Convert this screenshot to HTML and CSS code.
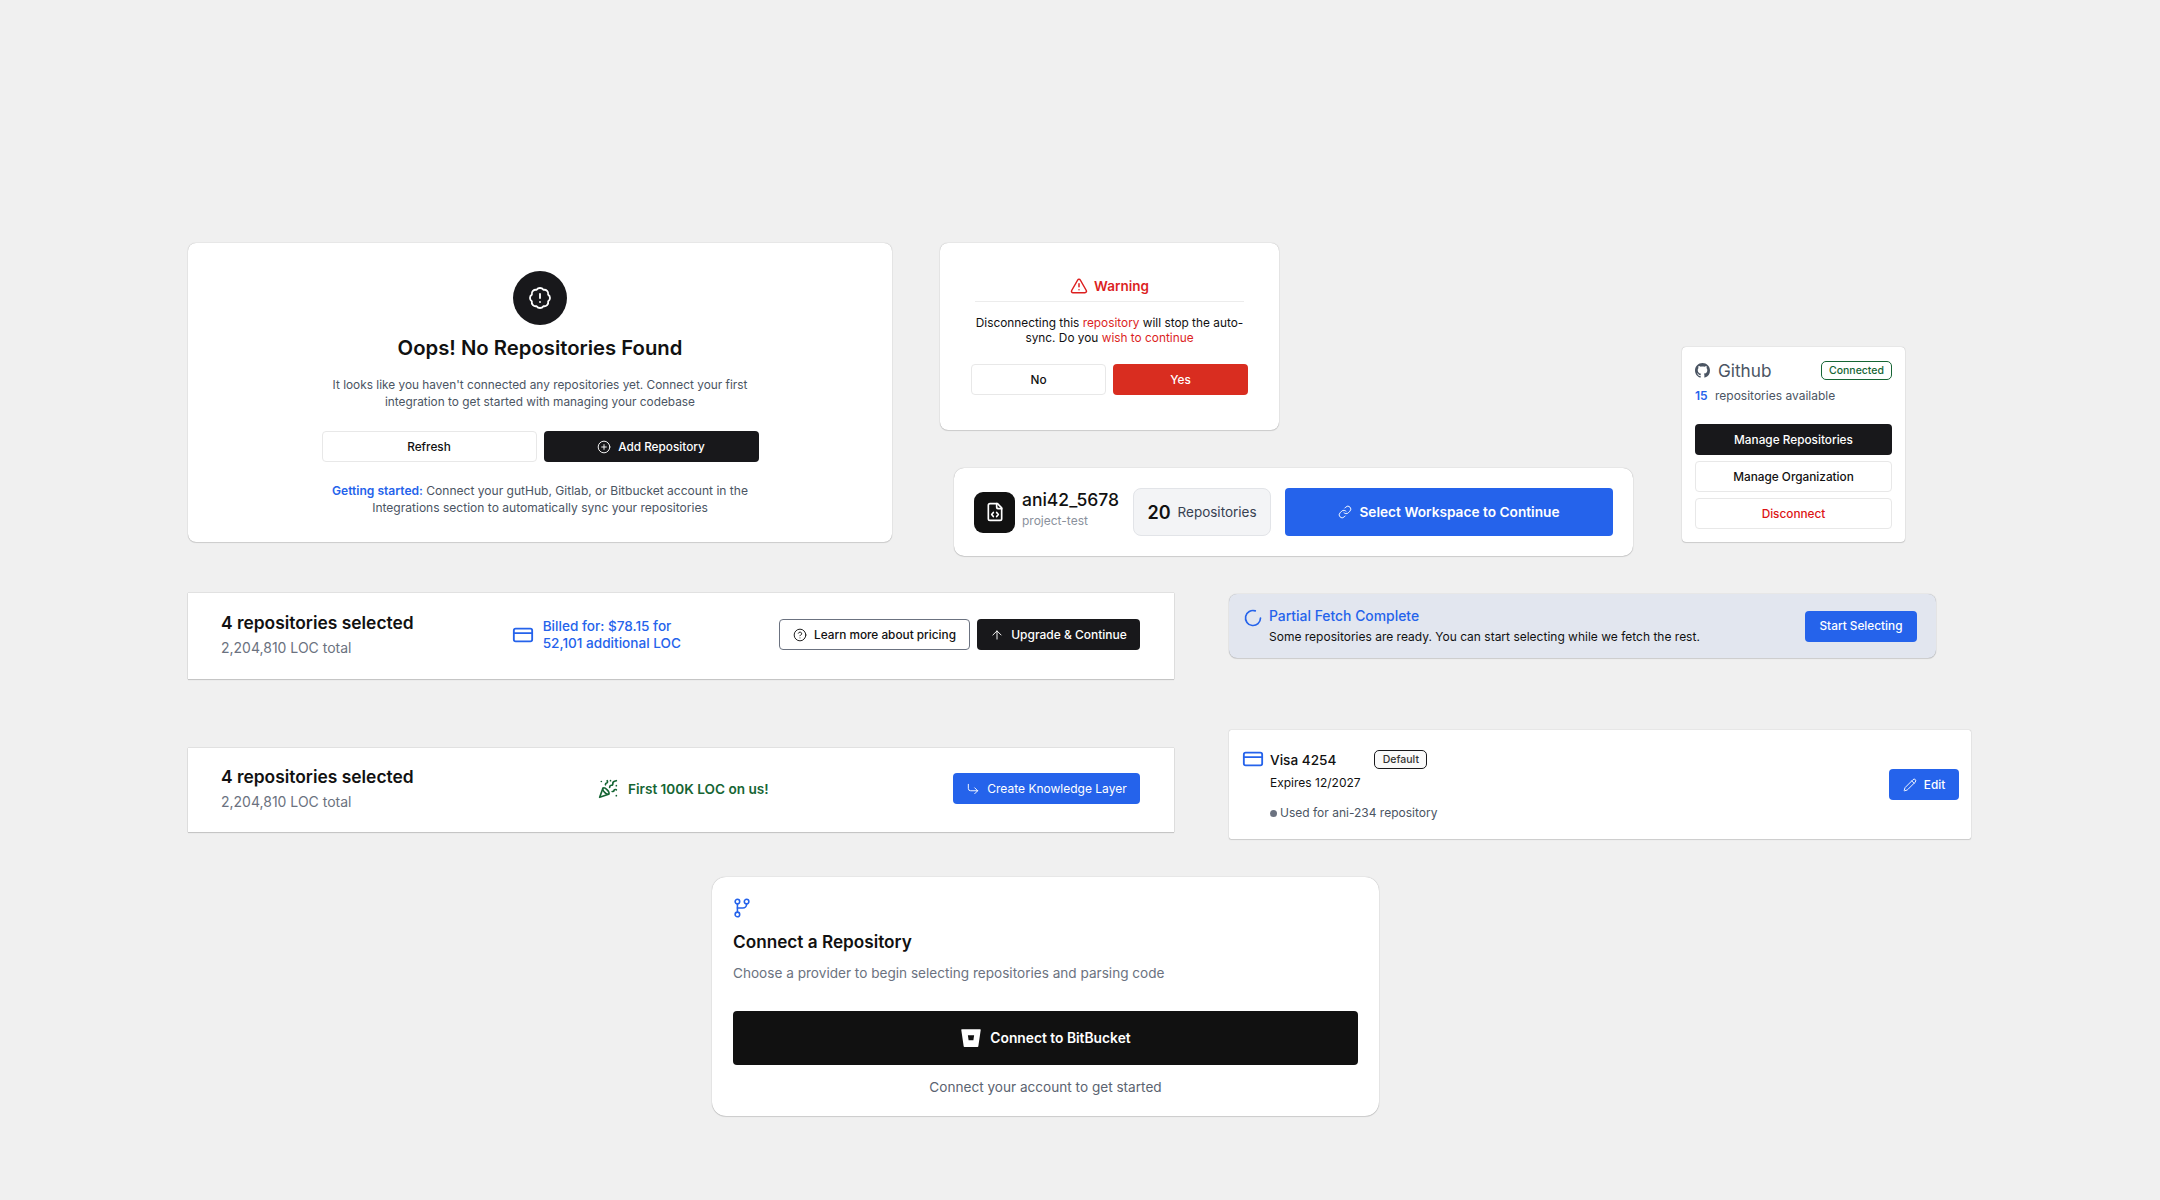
FILE: index.html
```html
<!DOCTYPE html>
<html lang="en">
<head>
   <meta charset="UTF-8">
   <meta name="viewport" content="width=device-width, initial-scale=1.0">
   <title>Repository Components</title>
   <link rel="stylesheet" href="styles.css">
</head>
<body>
   <main class="sheet">
      <section class="row-top">
         <div class="card empty-card">
            <div class="empty-badge">
               <svg class="icon icon-22" viewBox="0 0 24 24"><path d="M3.85 8.62a4 4 0 0 1 4.78-4.77 4 4 0 0 1 6.74 0 4 4 0 0 1 4.78 4.78 4 4 0 0 1 0 6.74 4 4 0 0 1-4.77 4.78 4 4 0 0 1-6.75 0 4 4 0 0 1-4.78-4.77 4 4 0 0 1 0-6.76Z"/><path d="M12 8v4"/><path d="M12 16h.01"/></svg>
            </div>
            <h2 class="empty-title">Oops! No Repositories Found</h2>
            <p class="empty-text">It looks like you haven't connected any repositories yet. Connect your first<br>integration to get started with managing your codebase</p>
            <div class="empty-actions">
               <button class="btn btn-light">Refresh</button>
               <button class="btn btn-dark">
                  <svg class="icon icon-14" viewBox="0 0 24 24"><circle cx="12" cy="12" r="10"/><path d="M8 12h8"/><path d="M12 8v8"/></svg>
                  Add Repository
               </button>
            </div>
            <p class="empty-text empty-hint"><span class="hint-label">Getting started:</span> Connect your gutHub, Gitlab, or Bitbucket account in the<br>Integrations section to automatically sync your repositories</p>
         </div>

         <div class="col-middle">
            <div class="card warning-card">
               <div class="warning-head">
                  <svg class="icon icon-18" viewBox="0 0 24 24"><path d="m21.73 18-8-14a2 2 0 0 0-3.48 0l-8 14A2 2 0 0 0 4 21h16a2 2 0 0 0 1.73-3"/><path d="M12 9v4"/><path d="M12 17h.01"/></svg>
                  Warning
               </div>
               <p class="warning-text">Disconnecting this <span class="red">repository</span> will stop the auto-<br>sync. Do you <span class="red">wish to continue</span></p>
               <div class="warning-actions">
                  <button class="btn btn-light">No</button>
                  <button class="btn btn-red">Yes</button>
               </div>
            </div>

            <div class="card workspace-card">
               <div class="workspace-logo">
                  <svg class="icon icon-20" viewBox="0 0 24 24"><path d="M15 2H6a2 2 0 0 0-2 2v16a2 2 0 0 0 2 2h12a2 2 0 0 0 2-2V7z"/><path d="M14 2v4a2 2 0 0 0 2 2h4"/><path d="M10 12.5 8 15l2 2.5"/><path d="m14 12.5 2 2.5-2 2.5"/></svg>
               </div>
               <div class="workspace-info">
                  <div class="workspace-name">ani42_5678</div>
                  <div class="workspace-sub">project-test</div>
               </div>
               <div class="workspace-count"><b>20</b> Repositories</div>
               <button class="btn btn-blue btn-workspace">
                  <svg class="icon icon-14" viewBox="0 0 24 24"><path d="M10 13a5 5 0 0 0 7.54.54l3-3a5 5 0 0 0-7.07-7.07l-1.72 1.71"/><path d="M14 11a5 5 0 0 0-7.54-.54l-3 3a5 5 0 0 0 7.07 7.07l1.71-1.71"/></svg>
                  Select Workspace to Continue
               </button>
            </div>
         </div>

         <div class="card github-card">
            <div class="github-head">
               <div class="github-name">
                  <svg class="github-mark" viewBox="0 0 16 16"><path d="M8 0C3.58 0 0 3.58 0 8c0 3.54 2.29 6.53 5.47 7.59.4.07.55-.17.55-.38 0-.19-.01-.82-.01-1.49-2.01.37-2.53-.49-2.69-.94-.09-.23-.48-.94-.82-1.13-.28-.15-.68-.52-.01-.53.63-.01 1.08.58 1.23.82.72 1.21 1.87.87 2.33.66.07-.52.28-.87.51-1.07-1.78-.2-3.64-.89-3.64-3.95 0-.87.31-1.59.82-2.15-.08-.2-.36-1.02.08-2.12 0 0 .67-.21 2.2.82.64-.18 1.32-.27 2-.27.68 0 1.36.09 2 .27 1.53-1.04 2.2-.82 2.2-.82.44 1.1.16 1.92.08 2.12.51.56.82 1.27.82 2.15 0 3.07-1.87 3.75-3.65 3.95.29.25.54.73.54 1.48 0 1.07-.01 1.93-.01 2.2 0 .21.15.46.55.38A8.013 8.013 0 0016 8c0-4.42-3.58-8-8-8z"/></svg>
                  Github
               </div>
               <span class="tag-connected">Connected</span>
            </div>
            <div class="github-count"><b>15</b> repositories available</div>
            <div class="github-actions">
               <button class="btn btn-dark">Manage Repositories</button>
               <button class="btn btn-light">Manage Organization</button>
               <button class="btn btn-light btn-danger-text">Disconnect</button>
            </div>
         </div>
      </section>

      <section class="row-bottom">
         <div class="col-bars">
            <div class="bar bar-billing">
               <div class="bar-summary">
                  <div class="bar-title">4 repositories selected</div>
                  <div class="bar-sub">2,204,810 LOC total</div>
               </div>
               <div class="billing-note">
                  <svg class="icon icon-card" viewBox="0 0 24 24"><rect x="2" y="5" width="20" height="14" rx="2"/><path d="M2 10h20"/></svg>
                  <span>Billed for: $78.15 for<br>52,101 additional LOC</span>
               </div>
               <div class="bar-actions">
                  <button class="btn btn-outline">
                     <svg class="icon icon-14" viewBox="0 0 24 24"><circle cx="12" cy="12" r="10"/><path d="M9.09 9a3 3 0 0 1 5.83 1c0 2-3 3-3 3"/><path d="M12 17h.01"/></svg>
                     Learn more about pricing
                  </button>
                  <button class="btn btn-dark btn-upgrade">
                     <svg class="icon icon-14" viewBox="0 0 24 24"><path d="m5 12 7-7 7 7"/><path d="M12 19V5"/></svg>
                     Upgrade &amp; Continue
                  </button>
               </div>
            </div>

            <div class="bar bar-free">
               <div class="bar-summary">
                  <div class="bar-title">4 repositories selected</div>
                  <div class="bar-sub">2,204,810 LOC total</div>
               </div>
               <div class="free-note">
                  <svg class="icon icon-20" viewBox="0 0 24 24"><path d="M5.8 11.3 2 22l10.7-3.79"/><path d="M4 3h.01"/><path d="M22 8h.01"/><path d="M15 2h.01"/><path d="M22 20h.01"/><path d="m22 2-2.24.75a2.9 2.9 0 0 0-1.96 3.12c.1.86-.57 1.63-1.45 1.63h-.38c-.86 0-1.6.6-1.76 1.44L14 10"/><path d="m22 13-.82-.33c-.86-.34-1.82.2-1.98 1.11c-.11.7-.72 1.22-1.43 1.22H17"/><path d="m11 2 .33.82c.34.86-.2 1.82-1.11 1.98C9.52 4.9 9 5.52 9 6.23V7"/><path d="M11 13c1.93 1.93 2.83 4.17 2 5-.83.83-3.07-.07-5-2-1.93-1.93-2.83-4.17-2-5 .83-.83 3.07.07 5 2Z"/></svg>
                  First 100K LOC on us!
               </div>
               <button class="btn btn-blue btn-knowledge">
                  <svg class="icon icon-14" viewBox="0 0 24 24"><path d="m15 10 5 5-5 5"/><path d="M4 4v7a4 4 0 0 0 4 4h12"/></svg>
                  Create Knowledge Layer
               </button>
            </div>
         </div>

         <div class="col-notices">
            <div class="card fetch-card">
               <svg class="icon icon-fetch" viewBox="0 0 24 24"><path d="M21 12a9 9 0 1 1-6.219-8.56"/></svg>
               <div class="fetch-text">
                  <div class="fetch-title">Partial Fetch Complete</div>
                  <div class="fetch-body">Some repositories are ready. You can start selecting while we fetch the rest.</div>
               </div>
               <button class="btn btn-blue btn-start">Start Selecting</button>
            </div>

            <div class="card visa-card">
               <svg class="icon icon-card icon-visa" viewBox="0 0 24 24"><rect x="2" y="5" width="20" height="14" rx="2"/><path d="M2 10h20"/></svg>
               <div class="visa-info">
                  <div class="visa-head">
                     <span class="visa-name">Visa 4254</span>
                     <span class="tag-default">Default</span>
                  </div>
                  <div class="visa-expiry">Expires 12/2027</div>
                  <div class="visa-used"><span class="dot"></span>Used for ani-234 repository</div>
               </div>
               <button class="btn btn-blue btn-edit">
                  <svg class="icon icon-14" viewBox="0 0 24 24"><path d="M21.174 6.812a1 1 0 0 0-3.986-3.987L3.842 16.174a2 2 0 0 0-.5.83l-1.321 4.352a.5.5 0 0 0 .623.622l4.353-1.32a2 2 0 0 0 .83-.497z"/><path d="m15 5 4 4"/></svg>
                  Edit
               </button>
            </div>
         </div>
      </section>

      <section class="card connect-card">
         <svg class="icon icon-branch" viewBox="0 0 24 24"><circle cx="7" cy="5" r="2.5"/><circle cx="17" cy="5" r="2.5"/><circle cx="7" cy="19" r="2.5"/><path d="M7 7.5v9"/><path d="M17 7.5v.5a4 4 0 0 1-4 4H7"/></svg>
         <h2 class="connect-title">Connect a Repository</h2>
         <p class="connect-text">Choose a provider to begin selecting repositories and parsing code</p>
         <button class="btn btn-connect">
            <svg class="bitbucket-mark" viewBox="0 0 24 24"><path fill-rule="evenodd" d="M2 2.5h20a.6.6 0 0 1 .6.7L20 21a.8.8 0 0 1-.8.7H4.8A.8.8 0 0 1 4 21L1.4 3.2a.6.6 0 0 1 .6-.7zM8.6 9l.8 5.5h5.2l.8-5.5z"/></svg>
            Connect to BitBucket
         </button>
         <p class="connect-foot">Connect your account to get started</p>
      </section>
   </main>
</body>
</html>
```

FILE: styles.css
```css
* {
   box-sizing: border-box;
}

body {
   font-family: Inter, "Noto Sans", sans-serif;
   background-color: #f0f0f0;
   color: #111111;
   margin: 0;
}

h2,
p {
   margin: 0;
}

.sheet {
   height: 1200px;
   padding: 243px 0 0 188px;
   overflow: hidden;
}

.card {
   background: #ffffff;
   border-radius: 8px;
   box-shadow: 0 0 1px rgba(0, 0, 0, 0.35), 0 1px 1px rgba(0, 0, 0, 0.12);
}

.icon {
   flex: none;
   fill: none;
   stroke: currentColor;
   stroke-width: 2;
   stroke-linecap: round;
   stroke-linejoin: round;
}

.icon-14 {
   width: 14px;
   height: 14px;
   stroke-width: 1.6;
}

.icon-18 {
   width: 18px;
   height: 18px;
}

.icon-20 {
   width: 20px;
   height: 20px;
}

.icon-22 {
   width: 24px;
   height: 24px;
   stroke-width: 1.8;
}

.btn {
   display: flex;
   align-items: center;
   justify-content: center;
   gap: 7px;
   height: 31px;
   padding: 0;
   border: 1px solid transparent;
   border-radius: 4px;
   font-family: inherit;
   font-size: 11.8px;
   font-weight: 500;
   cursor: pointer;
}

.btn-light {
   background: #ffffff;
   border-color: #e8e8e8;
   color: #111111;
}

.btn-dark {
   background: #18181b;
   color: #ffffff;
}

.btn-red {
   background: #d92d20;
   color: #ffffff;
}

.btn-blue {
   background: #2563eb;
   color: #ffffff;
}

.btn-outline {
   background: #ffffff;
   border-color: #6b7280;
   color: #111111;
}

.row-top {
   display: flex;
   align-items: flex-start;
   height: 350px;
}

/* empty state */
.empty-card {
   width: 704px;
   height: 299px;
   padding-top: 28px;
   margin-right: 48px;
   display: flex;
   flex-direction: column;
   align-items: center;
   text-align: center;
}

.empty-badge {
   width: 54px;
   height: 54px;
   border-radius: 50%;
   background: #18181b;
   color: #ffffff;
   display: flex;
   align-items: center;
   justify-content: center;
}

.empty-title {
   font-size: 20.3px;
   font-weight: 600;
   line-height: 24px;
   margin-top: 11px;
}

.empty-text {
   font-size: 11.85px;
   line-height: 17px;
   color: #4b5563;
   margin-top: 17px;
}

.empty-actions {
   display: flex;
   gap: 7px;
   margin-top: 20px;
}

.empty-actions .btn {
   width: 215px;
}

.empty-hint {
   margin-top: 20px;
   font-size: 12.05px;
}

.hint-label {
   color: #2563eb;
   font-weight: 600;
}

/* warning */
.col-middle {
   width: 693px;
}

.warning-card {
   width: 339px;
   height: 187px;
   padding: 32px 31px 0;
}

.warning-head {
   display: flex;
   align-items: center;
   justify-content: center;
   gap: 6px;
   height: 22px;
   margin: 0 4px;
   color: #dc1f1f;
   font-size: 13.5px;
   font-weight: 600;
}

.warning-text {
   margin: 4px 4px 0;
   padding-top: 14px;
   border-top: 1px solid #ececec;
   font-size: 11.85px;
   line-height: 14.5px;
   text-align: center;
   white-space: nowrap;
}

.red {
   color: #dc1f1f;
}

.warning-actions {
   display: flex;
   gap: 7px;
   margin-top: 19px;
}

.warning-actions .btn {
   width: 135px;
}

/* workspace */
.workspace-card {
   display: flex;
   align-items: center;
   height: 88px;
   margin: 38px 0 0 14px;
   width: 679px;
   padding: 0 20px;
   border-radius: 10px;
}

.workspace-logo {
   width: 41px;
   height: 41px;
   flex: none;
   border-radius: 9px;
   background: #111111;
   color: #ffffff;
   display: flex;
   align-items: center;
   justify-content: center;
}

.workspace-info {
   margin-left: 7px;
   width: 111px;
   padding-bottom: 5px;
}

.workspace-name {
   font-size: 17.5px;
   font-weight: 500;
   line-height: 20px;
}

.workspace-sub {
   font-size: 12px;
   line-height: 16px;
   margin-top: 3px;
   color: #8a919c;
}

.workspace-count {
   display: flex;
   align-items: center;
   justify-content: center;
   gap: 7px;
   width: 138px;
   height: 48px;
   background: #f3f4f6;
   border: 1px solid #e2e4e8;
   border-radius: 8px;
   font-size: 13.5px;
   color: #374151;
}

.workspace-count b {
   font-size: 18px;
   font-weight: 600;
   color: #111111;
}

.btn-workspace {
   width: 328px;
   height: 48px;
   margin-left: 14px;
   font-size: 13.7px;
   font-weight: 600;
}

/* github */
.github-card {
   width: 223px;
   height: 195px;
   margin: 104px 0 0 49px;
   padding: 13px 13px 0;
   border-radius: 4px;
}

.github-head {
   display: flex;
   align-items: center;
   justify-content: space-between;
}

.github-name {
   display: flex;
   align-items: center;
   gap: 8px;
   font-size: 17.2px;
   color: #4b5563;
}

.github-mark {
   width: 15px;
   height: 15px;
   fill: #4b5563;
}

.tag-connected {
   display: flex;
   align-items: center;
   justify-content: center;
   width: 71px;
   height: 19px;
   border: 1px solid #166534;
   border-radius: 5px;
   font-size: 10.5px;
   font-weight: 500;
   color: #166534;
}

.github-count {
   margin-top: 7px;
   font-size: 12px;
   line-height: 16px;
   color: #4b5563;
}

.github-count b {
   font-weight: 600;
   color: #2563eb;
   margin-right: 4px;
}

.github-actions {
   display: flex;
   flex-direction: column;
   gap: 6px;
   margin-top: 20px;
}

.btn-danger-text {
   color: #dc1414;
}

/* bottom rows */
.row-bottom {
   display: flex;
   align-items: flex-start;
}

.col-bars {
   width: 986px;
   margin-right: 55px;
}

.bar {
   display: flex;
   align-items: center;
   justify-content: space-between;
   width: 986px;
   padding: 0 34px 3px 33px;
   background: #ffffff;
   box-shadow: 0 0 1px rgba(0, 0, 0, 0.35), 0 1px 1px rgba(0, 0, 0, 0.12);
}

.bar-billing {
   height: 86px;
}

.bar-free {
   height: 84px;
   margin-top: 69px;
}

.bar-title {
   font-size: 17.4px;
   font-weight: 600;
   line-height: 20px;
}

.bar-sub {
   font-size: 14px;
   line-height: 16px;
   margin-top: 7px;
   color: #6b7280;
}

.billing-note {
   display: flex;
   align-items: center;
   gap: 9px;
   font-size: 13.6px;
   font-weight: 500;
   line-height: 17px;
   color: #2563eb;
}

.icon-card {
   width: 22px;
   height: 22px;
   color: #2563eb;
}

.bar-actions {
   display: flex;
   gap: 7px;
}

.btn-outline {
   width: 191px;
}

.btn-upgrade {
   width: 163px;
   font-size: 12px;
}

.free-note {
   display: flex;
   align-items: center;
   gap: 10px;
   font-size: 13.6px;
   font-weight: 600;
   color: #166534;
}

.btn-knowledge {
   width: 187px;
   font-size: 12px;
   font-weight: 400;
   background: #2563eb;
}

/* notices */
.fetch-card {
   display: flex;
   align-items: center;
   width: 707px;
   height: 64px;
   margin-top: 1px;
   padding: 0 19px 0 14px;
   background: #e2e6ef;
}

.icon-fetch {
   width: 20px;
   height: 20px;
   align-self: flex-start;
   margin-top: 14px;
   color: #2563eb;
}

.fetch-text {
   flex: 1;
   margin-left: 6px;
}

.fetch-title {
   font-size: 13.9px;
   font-weight: 500;
   line-height: 16px;
   color: #2563eb;
}

.fetch-body {
   font-size: 12px;
   line-height: 16px;
   margin-top: 5px;
}

.btn-start {
   width: 112px;
}

.visa-card {
   display: flex;
   width: 742px;
   height: 109px;
   margin-top: 72px;
   padding: 0 12px 0 13px;
   align-items: center;
   border-radius: 2px;
}

.icon-visa {
   align-self: flex-start;
   margin-top: 18px;
}

.visa-info {
   flex: 1;
   margin-left: 6px;
   padding-top: 2px;
}

.visa-head {
   display: flex;
   align-items: center;
   gap: 38px;
}

.visa-name {
   font-size: 13.6px;
   font-weight: 500;
}

.tag-default {
   display: flex;
   align-items: center;
   justify-content: center;
   width: 53px;
   height: 19px;
   border: 1px solid #18181b;
   border-radius: 5px;
   background: #fafafa;
   font-size: 10.5px;
   font-weight: 500;
   color: #333333;
}

.visa-expiry {
   font-size: 12px;
   line-height: 16px;
   margin-top: 6px;
}

.visa-used {
   display: flex;
   align-items: center;
   gap: 3px;
   margin-top: 14px;
   font-size: 12px;
   line-height: 16px;
   color: #4b5563;
}

.dot {
   width: 7px;
   height: 7px;
   border-radius: 50%;
   background: #6b7280;
}

.btn-edit {
   width: 70px;
}

/* connect */
.connect-card {
   width: 667px;
   height: 239px;
   margin: 38px 0 0 524px;
   padding: 20px 21px 0;
   border-radius: 14px;
}

.icon-branch {
   display: block;
   width: 22px;
   height: 22px;
   margin-left: -2px;
   color: #2563eb;
   stroke-width: 1.7;
}

.connect-title {
   font-size: 17.2px;
   font-weight: 600;
   line-height: 20px;
   margin-top: 13px;
}

.connect-text {
   font-size: 13.6px;
   line-height: 18px;
   margin-top: 12px;
   color: #6b7280;
}

.btn-connect {
   width: 100%;
   height: 54px;
   margin-top: 29px;
   gap: 8px;
   background: #111111;
   color: #ffffff;
   font-size: 13.8px;
   font-weight: 600;
}

.bitbucket-mark {
   width: 22px;
   height: 22px;
   fill: #ffffff;
}

.connect-foot {
   margin-top: 13px;
   font-size: 13.6px;
   line-height: 18px;
   text-align: center;
   color: #5b6370;
}
```
